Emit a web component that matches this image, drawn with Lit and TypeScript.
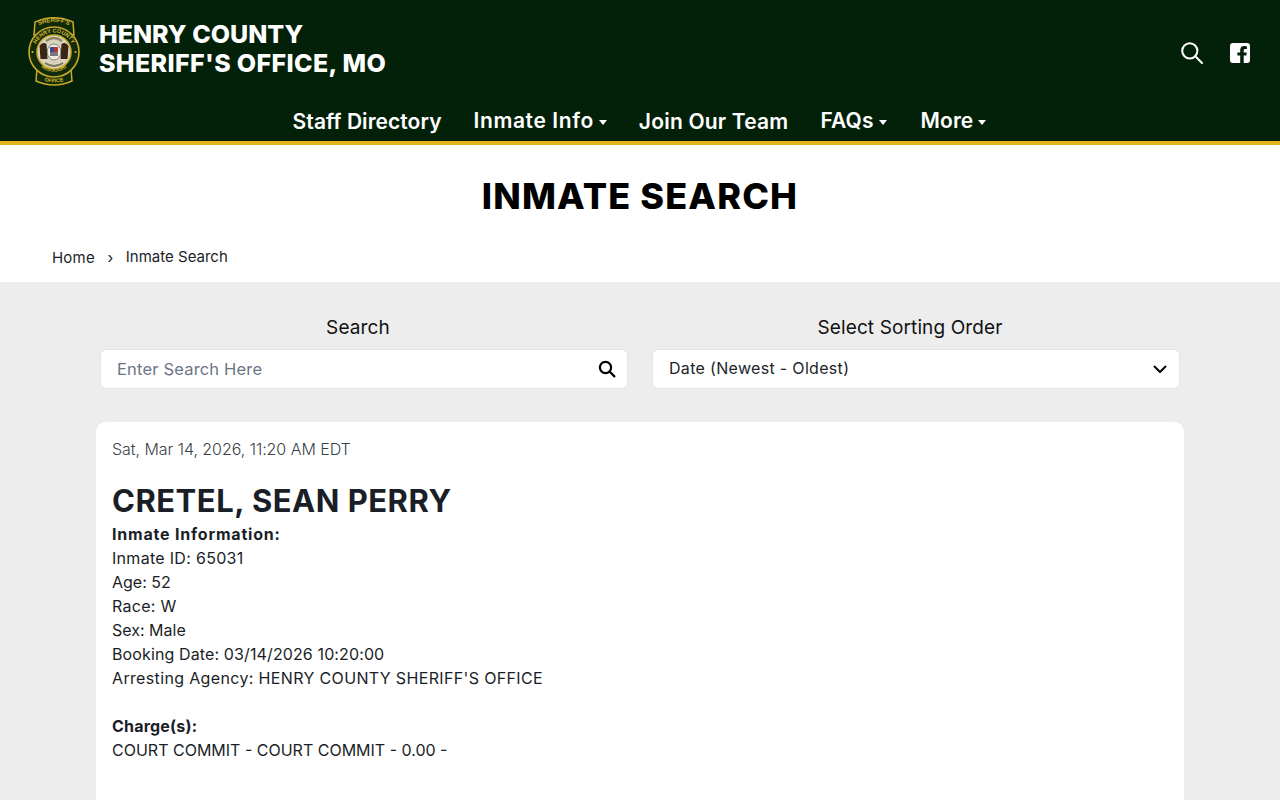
import { LitElement, html, css, svg } from "lit";
import { customElement } from "lit/decorators.js";

const seal = svg`
<svg class="seal" viewBox="0 0 52 72" width="52" height="72" aria-hidden="true">
  <defs>
    <path id="a1" d="M10 10.5 Q26 3.5 42 10.5"/>
    <path id="a2" d="M6.5 37 A19.5 19.5 0 0 1 45.5 37"/>
    <path id="a3" d="M7 44 A20.5 20.5 0 0 0 45 44"/>
    <path id="a4" d="M15 65.5 Q26 69.5 37 65.5"/>
  </defs>
  <path d="M7 7 Q26 -1.5 45 7 L46 20 H6 Z" fill="#0f2a08" stroke="#c9a928" stroke-width="1.5"/>
  <path d="M9 54 H43 L44 66 Q26 74 8 66 Z" fill="#0f2a08" stroke="#c9a928" stroke-width="1.5"/>
  <circle cx="26" cy="37" r="25" fill="#122c0a" stroke="#c9a928" stroke-width="1.6"/>
  <circle cx="26" cy="37" r="17" fill="#d9d3bd" stroke="#c9a928" stroke-width="1.5"/>
  <path d="M11.5 31 q3 -5 7 -2 l1 15 h-7 Z M40.5 31 q-3 -5 -7 -2 l-1 15 h7 Z" fill="#3a2414"/>
  <ellipse cx="26" cy="37" rx="6.8" ry="8" fill="#f0ede0" stroke="#444" stroke-width=".6"/>
  <rect x="22" y="32" width="4" height="5" fill="#3c4c8c"/>
  <rect x="26" y="32" width="4" height="5" fill="#b03a34"/>
  <rect x="22" y="37" width="8" height="4" fill="#77787c"/>
  <path d="M18 26 Q26 20 34 26" fill="none" stroke="#8f8566" stroke-width="2.2"/>
  <path d="M17 48 Q26 54 35 48" fill="none" stroke="#77725a" stroke-width="1.8"/>
  <circle cx="4.5" cy="37" r="1.1" fill="#d3b531"/>
  <circle cx="47.5" cy="37" r="1.1" fill="#d3b531"/>
  <g class="sealtxt">
    <text font-size="6"><textPath href="#a1" startOffset="50%" text-anchor="middle">SHERIFF'S</textPath></text>
    <text font-size="5.6"><textPath href="#a2" startOffset="50%" text-anchor="middle">HENRY COUNTY</textPath></text>
    <text font-size="5.6"><textPath href="#a3" startOffset="50%" text-anchor="middle">MISSOURI</textPath></text>
    <text font-size="5.4"><textPath href="#a4" startOffset="50%" text-anchor="middle">OFFICE</textPath></text>
  </g>
</svg>`;

const caret = html`<svg class="caret" viewBox="0 0 8 5" width="8" height="5" aria-hidden="true"><path d="M0 0H8L4 5Z" fill="currentColor"/></svg>`;

@customElement("app-root")
export class AppRoot extends LitElement {
  static styles = css`
    :host { display: block; height: 800px; overflow: hidden; background: #ededed; font-family: Inter, "Liberation Sans", sans-serif; color: #1a1e27; }
    header { background: #022108; border-bottom: 4px solid #e5b51f; height: 141px; color: #fff; display: flex; flex-direction: column; }
    .top { height: 100px; display: flex; align-items: flex-start; justify-content: space-between; padding: 15px 30px 0 28px; }
    .brand { display: flex; gap: 19px; }
    .seal { display: block; flex: none; }
    .sealtxt { fill: #d3b531; font-family: "Liberation Sans", sans-serif; font-weight: 700; }
    .brand-name { margin: 5px 0 0; font-size: 25px; line-height: 29px; font-weight: 800; white-space: nowrap; }
    .brand-name span { display: block; }
    .brand-name .l2 { letter-spacing: 0.36px; }
    .tools { display: flex; align-items: center; gap: 27px; padding-top: 27px; }
    .tools svg { display: block; }
    nav { display: flex; justify-content: center; align-items: center; gap: 32px; height: 41px; }
    .nav-item { display: flex; align-items: center; gap: 5px; font-size: 21px; font-weight: 600; line-height: 26px; white-space: nowrap; letter-spacing: 0.1px; padding-bottom: 1px; }
    .nav-item.up { padding-bottom: 3px; }
    .nav-item.st { letter-spacing: 0.05px; }
    .nav-item.im { letter-spacing: 0.6px; }
    .nav-item.jo { letter-spacing: 0.2px; }
    .nav-item.ga { margin-left: 2px; margin-right: 1px; }
    .caret { margin-top: 3px; }
    .hero { background: #fff; height: 137px; display: flex; flex-direction: column; }
    h1 { margin: 0; padding-top: 29px; text-align: center; font-size: 36px; line-height: 44px; font-weight: 800; color: #000; letter-spacing: 1.15px; }
    .crumbs { margin-top: 29px; padding-left: 52px; display: flex; align-items: center; font-size: 15px; line-height: 20px; color: #1a1e27; }
    .crumbs .home { position: relative; top: 1px; letter-spacing: 0.2px; }
    .crumbs .sep { width: 31px; text-align: center; position: relative; top: 1px; }
    main { padding: 36px 96px 0; }
    .filters { display: grid; grid-template-columns: 1fr 1fr; gap: 24px; padding: 0 4px; }
    .field { display: flex; flex-direction: column; }
    .field label { text-align: center; font-size: 19px; line-height: 20px; margin-bottom: 11px; color: #111; padding-right: 12px; letter-spacing: 0.12px; }
    .box { height: 40px; box-sizing: border-box; border: 1px solid #e2e5ea; background: #fff; border-radius: 6px; display: flex; align-items: center; justify-content: space-between; padding: 0 11px 0 16px; font-size: 16px; }
    .ph { color: #6c7585; font-size: 16.5px; letter-spacing: 0.18px; }
    .val { color: #212529; position: relative; top: -1px; letter-spacing: 0.32px; }
    .card { margin-top: 33px; background: #fff; border-radius: 10px; height: 500px; padding: 15px 16px; box-sizing: border-box; }
    .stamp { font-size: 16px; line-height: 24px; font-weight: 300; color: #3a3f48; letter-spacing: -0.05px; }
    h2 { margin: 21px 0 2px; font-size: 31px; line-height: 38px; font-weight: 700; color: #1a1e27; letter-spacing: 0.5px; }
    .lines { font-size: 16px; line-height: 24px; color: #1a1e27; }
    .lines b { font-weight: 700; }
    .lines .s1 { letter-spacing: 0.8px; }
    .lines .s2 { letter-spacing: 0.3px; }
    .lines .s3 { letter-spacing: 0.12px; }
    .lines .s4 { letter-spacing: 0.35px; }
    .lines .s5 { letter-spacing: 0.2px; }
    .gap { height: 24px; }
  `;

  render() {
    return html`
      <header>
        <div class="top">
          <div class="brand">
            ${seal}
            <div class="brand-name"><span>HENRY COUNTY</span><span class="l2">SHERIFF'S OFFICE, MO</span></div>
          </div>
          <div class="tools">
            <svg width="22" height="22" viewBox="0 0 22 22" fill="none" stroke="#fff" stroke-width="2" aria-hidden="true"><circle cx="8.8" cy="8.8" r="7.6"/><path d="M14.3 14.3 21 21" stroke-linecap="round"/></svg>
            <svg width="20" height="20" viewBox="0 0 20 20" aria-hidden="true"><path fill="#fff" fill-rule="evenodd" d="M3 0H17a3 3 0 0 1 3 3V17a3 3 0 0 1-3 3H13.7V12.6h2.6l.5-3.1h-3.1V7.6c0-.9.4-1.6 1.7-1.6h1.5V3.3S15.6 3 14.3 3c-2.6 0-4.1 1.6-4.1 4.2v2.3H7.4v3.1h2.8V20H3a3 3 0 0 1-3-3V3a3 3 0 0 1 3-3Z"/></svg>
          </div>
        </div>
        <nav>
          <span class="nav-item st">Staff Directory</span>
          <span class="nav-item up im">Inmate Info ${caret}</span>
          <span class="nav-item jo">Join Our Team</span>
          <span class="nav-item up">FAQs ${caret}</span>
          <span class="nav-item up ga">More ${caret}</span>
        </nav>
      </header>
      <section class="hero">
        <h1>INMATE SEARCH</h1>
        <div class="crumbs"><span class="home">Home</span><span class="sep">›</span><span>Inmate Search</span></div>
      </section>
      <main>
        <div class="filters">
          <div class="field">
            <label>Search</label>
            <div class="box">
              <span class="ph">Enter Search Here</span>
              <svg width="18" height="18" viewBox="0 0 18 18" fill="none" stroke="#000" stroke-width="2.2" aria-hidden="true"><circle cx="7.5" cy="7.5" r="5.6"/><path d="m11.8 11.8 4.6 4.6" stroke-linecap="round"/></svg>
            </div>
          </div>
          <div class="field">
            <label>Select Sorting Order</label>
            <div class="box">
              <span class="val">Date (Newest - Oldest)</span>
              <svg width="16" height="16" viewBox="0 0 16 16" fill="none" stroke="#000" stroke-width="2" aria-hidden="true"><path d="m2.5 5.5 5.5 5.5 5.5-5.5" stroke-linecap="round" stroke-linejoin="round"/></svg>
            </div>
          </div>
        </div>
        <article class="card">
          <div class="stamp">Sat, Mar 14, 2026, 11:20 AM EDT</div>
          <h2>CRETEL, SEAN PERRY</h2>
          <div class="lines">
            <div class="s1"><b>Inmate Information:</b></div>
            <div class="s2">Inmate ID: 65031</div>
            <div>Age: 52</div>
            <div class="s2">Race: W</div>
            <div>Sex: Male</div>
            <div class="s3">Booking Date: 03/14/2026 10:20:00</div>
            <div class="s4">Arresting Agency: HENRY COUNTY SHERIFF'S OFFICE</div>
            <div class="gap"></div>
            <div class="s5"><b>Charge(s):</b></div>
            <div>COURT COMMIT - COURT COMMIT - 0.00 -</div>
          </div>
        </article>
      </main>
    `;
  }
}
